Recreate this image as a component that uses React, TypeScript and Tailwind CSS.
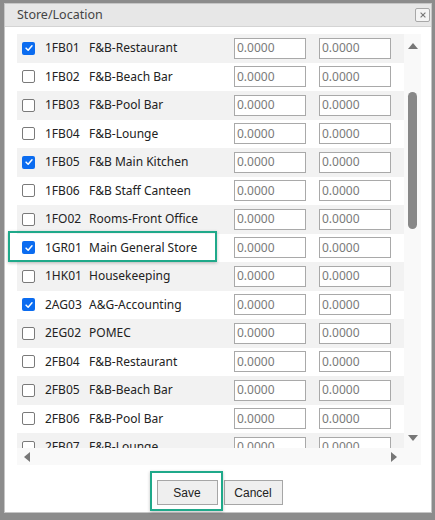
import React from 'react';

type Loc = { code: string; name: string; checked: boolean };

const LOCATIONS: Loc[] = [
  { code: '1FB01', name: 'F&B-Restaurant', checked: true },
  { code: '1FB02', name: 'F&B-Beach Bar', checked: false },
  { code: '1FB03', name: 'F&B-Pool Bar', checked: false },
  { code: '1FB04', name: 'F&B-Lounge', checked: false },
  { code: '1FB05', name: 'F&B Main Kitchen', checked: true },
  { code: '1FB06', name: 'F&B Staff Canteen', checked: false },
  { code: '1FO02', name: 'Rooms-Front Office', checked: false },
  { code: '1GR01', name: 'Main General Store', checked: true },
  { code: '1HK01', name: 'Housekeeping', checked: false },
  { code: '2AG03', name: 'A&G-Accounting', checked: true },
  { code: '2EG02', name: 'POMEC', checked: false },
  { code: '2FB04', name: 'F&B-Restaurant', checked: false },
  { code: '2FB05', name: 'F&B-Beach Bar', checked: false },
  { code: '2FB06', name: 'F&B-Pool Bar', checked: false },
  { code: '2FB07', name: 'F&B-Lounge', checked: false },
];

function Checkbox({ checked }: { checked: boolean }) {
  if (checked) {
    return (
      <span className="flex h-[13px] w-[13px] shrink-0 items-center justify-center rounded-[2px] bg-[#0b6cf0]">
        <svg viewBox="0 0 12 12" className="h-[10px] w-[10px]">
          <path d="M2.5 6.2 L5 8.6 L9.6 3.4" fill="none" stroke="white" strokeWidth="1.8" strokeLinecap="round" strokeLinejoin="round" />
        </svg>
      </span>
    );
  }
  return <span className="h-[13px] w-[13px] shrink-0 rounded-[2px] border border-[#7a7a7a] bg-white" />;
}

function Row({ loc, index }: { loc: Loc; index: number }) {
  return (
    <div className={`flex h-[28.5px] shrink-0 items-center pl-[5px] ${index % 2 === 0 ? 'bg-[#f2f2f2]' : 'bg-white'}`}>
      <Checkbox checked={loc.checked} />
      <span className="ml-[10px] w-[44px] shrink-0">{loc.code}</span>
      <span className="w-[145px] shrink-0 whitespace-nowrap">{loc.name}</span>
      <div className="flex h-[21px] w-[72px] shrink-0 items-center border border-[#a9a9a9] bg-white pl-[2px] text-[#7a7a7a]">0.0000</div>
      <div className="ml-[13px] flex h-[21px] w-[72px] shrink-0 items-center border border-[#a9a9a9] bg-white pl-[2px] text-[#7a7a7a]">0.0000</div>
    </div>
  );
}

export default function App() {
  return (
    <div className="relative h-[520px] w-[435px] overflow-hidden bg-[#8c8c8c] pl-[4px] pt-[3px]" style={{ fontFamily: '"Noto Sans", "Open Sans", sans-serif' }}>
      <div className="relative flex h-[510px] w-[428px] flex-col border border-[#c6c6c6] bg-white">
        {/* Header */}
        <div className="flex h-[23px] shrink-0 items-center justify-between border-b border-[#d4d4d4] bg-[#e7e7e7] pl-[12px] pr-[1px] text-[12.5px] text-[#444]">
          <span>Store/Location</span>
          <span className="flex h-[14px] w-[15px] items-center justify-center rounded-[2px] border border-[#a8a8a8] bg-[#f4f4f4]">
            <svg viewBox="0 0 10 10" className="h-[8px] w-[8px]">
              <path d="M2 2 L8 8 M8 2 L2 8" stroke="#777" strokeWidth="1.4" />
            </svg>
          </span>
        </div>

        {/* Grid */}
        <div className="ml-[12px] mt-[7px] flex h-[431px] w-[404px] flex-col text-[12px] text-[#222]">
          <div className="flex h-[414px]">
            <div className="flex w-[387px] flex-col overflow-hidden">
              {LOCATIONS.map((loc, i) => (
                <Row key={loc.code} loc={loc} index={i} />
              ))}
            </div>
            <div className="flex w-[17px] flex-col items-center bg-[#f9f9f9]">
              <svg viewBox="0 0 10 6" className="mt-[9px] h-[6px] w-[10px]">
                <path d="M5 0 L10 6 L0 6 Z" fill="#777" />
              </svg>
              <div className="mt-[43px] h-[137px] w-[9px] rounded-full bg-[#888]" />
              <div className="flex-1" />
              <svg viewBox="0 0 10 6" className="mb-[7px] h-[6px] w-[10px]">
                <path d="M0 0 L10 0 L5 6 Z" fill="#777" />
              </svg>
            </div>
          </div>
          <div className="flex h-[17px] items-center bg-[#f9f9f9]">
            <div className="flex w-[387px] items-center justify-between px-[7px]">
              <svg viewBox="0 0 6 10" className="h-[10px] w-[6px]">
                <path d="M6 0 L6 10 L0 5 Z" fill="#777" />
              </svg>
              <svg viewBox="0 0 6 10" className="h-[10px] w-[6px]">
                <path d="M0 0 L6 5 L0 10 Z" fill="#777" />
              </svg>
            </div>
          </div>
        </div>

        {/* Footer */}
        <div className="mt-[15px] flex w-[426px] justify-center gap-[6px] pl-[3px] text-[12px] text-[#222]" style={{ fontFamily: '"Liberation Sans", Arial, sans-serif' }}>
          <button type="button" className="h-[25px] w-[61px] border border-[#a6a6a6] bg-[#efefef]">Save</button>
          <button type="button" className="h-[25px] w-[59px] border border-[#a6a6a6] bg-[#efefef]">Cancel</button>
        </div>

        {/* Highlights */}
        <div className="absolute left-[3px] top-[227px] h-[31px] w-[209px] border-2 border-[#1fa98a] shadow-[0_1px_3px_rgba(0,0,0,0.25)]" />
        <div className="absolute left-[145px] top-[467px] h-[40px] w-[73px] border-2 border-[#1fa98a] shadow-[0_1px_3px_rgba(0,0,0,0.25)]" />
      </div>
    </div>
  );
}
